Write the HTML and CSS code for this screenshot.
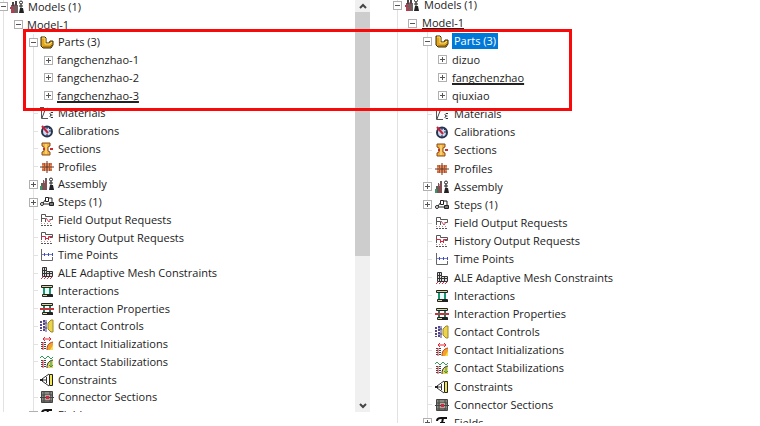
FILE: index.html
```html
<!DOCTYPE html>
<html lang="en">
<head>
    <meta charset="utf-8">
    <title>Model Tree</title>
    <link rel="stylesheet" href="styles.css">
</head>
<body>
<svg class="sprite" aria-hidden="true">
    <symbol id="models" viewBox="0 0 14 14">
        <path d="M1 5h7v8H1z" fill="#666"/>
        <path d="M2 2h2v4H2zM5 1h2v5H5z" fill="#444"/>
        <path d="M0 7h3v2H0zM1 11h3v2H1z" fill="#d22f45"/>
        <path d="M4 4v9M6 5v8" stroke="#b33a4a" stroke-dasharray="1 1"/>
        <path d="M11 4v4M9 6h4" stroke="#222"/>
        <path d="M10 8h3l1 5H9z" fill="#222"/>
        <circle cx="11" cy="2.500" r="1.500" fill="#fff" stroke="#222"/>
    </symbol>
    <symbol id="parts" viewBox="0 0 14 14">
        <path d="M1 2h4l1 1v5h3l1-2h3v4l-2 3H3l-2-2z" fill="#e2a51f" stroke="#3b2a08"/>
        <path d="M2 3h3v6h5l2-2" fill="none" stroke="#ffe06a"/>
        <path d="M3 12h7l2-2" fill="none" stroke="#805a10"/>
    </symbol>
    <symbol id="materials" viewBox="0 0 14 14">
        <path d="M1.500 1v11.500H8" fill="none" stroke="#555"/>
        <path d="M2 12L5 4l3-2" fill="none" stroke="#444"/>
        <path d="M13 6.500h-2l-1 1 1 1.500h1.500M11 9l-1 1.500 1 1h2" fill="none" stroke="#333"/>
        <path d="M0 1.500h4" stroke="#555"/>
    </symbol>
    <symbol id="calibrations" viewBox="0 0 14 14">
        <circle cx="7" cy="7.500" r="5" fill="#c9daf2" stroke="#28344e" stroke-width="2"/>
        <path d="M2 2l6 7" stroke="#c5203a" stroke-width="2"/>
        <path d="M7 3v2M11 7H9M7 12v-2M10 4L9 5" stroke="#1c2a4a"/>
    </symbol>
    <symbol id="sections" viewBox="0 0 14 14">
        <path d="M2 1h8v3L8 5v4l2 1v3H2v-3l2-1V5L2 4z" fill="#efb23c" stroke="#8a4a1a"/>
        <path d="M6 2v10" stroke="#fff0a0"/>
        <path d="M10 7h3M3 7h2" stroke="#d3262c" stroke-width="2"/>
    </symbol>
    <symbol id="profiles" viewBox="0 0 14 14">
        <path d="M2 3h10v8H2z" fill="#ee8f5d"/>
        <path d="M2 3h3v2H2zM9 3h3v2H9zM2 9h3v2H2zM9 9h3v2H9z" fill="#d46e45"/>
        <path d="M0 7h14M7 1v12" stroke="#56342a"/>
        <path d="M4.500 3v8M9.500 3v8" stroke="#a5552f"/>
    </symbol>
    <symbol id="assembly" viewBox="0 0 14 14">
        <path d="M1 6h2V3h1v3h1V1h2v12H1z" fill="#5e625e"/>
        <path d="M0 9h2v4H0z" fill="#3f9464"/>
        <path d="M4 4v9M6 3v10" stroke="#a63d46"/>
        <path d="M11 4v4M9 6h4" stroke="#222"/>
        <path d="M10 8h3l1 5H9z" fill="#222"/>
        <circle cx="11" cy="2.500" r="1.500" fill="#fff" stroke="#222"/>
    </symbol>
    <symbol id="steps" viewBox="0 0 14 14">
        <path d="M3 8l3-4M4 9h5M8 3h4v4" fill="none" stroke="#222"/>
        <circle cx="2" cy="9" r="1.500" fill="#fff" stroke="#222"/>
        <path d="M5.500 2.500h3v4h-3z" fill="#fff" stroke="#222"/>
        <path d="M9.500 7.500h4v3h-4z" fill="#777" stroke="#222"/>
    </symbol>
    <symbol id="field" viewBox="0 0 14 14">
        <path d="M1.500 9V1.500h4v2h7v3h-3M1.500 5.500h4V9" fill="none" stroke="#555"/>
        <path d="M6 5l3 4 2-3" fill="none" stroke="#c8475a"/>
        <path d="M1 12.500h12" stroke="#555" stroke-dasharray="2 1"/>
        <path d="M1 10.500h12" stroke="#c5858c" stroke-dasharray="1 2"/>
    </symbol>
    <symbol id="history" viewBox="0 0 14 14">
        <path d="M1.500 9V1.500h4v2h7v3h-3" fill="none" stroke="#555"/>
        <path d="M1 5.500h4.500V9M8.500 9V5.500H12M5 7.500h3" fill="none" stroke="#d02b42"/>
        <path d="M1 12.500h12" stroke="#555" stroke-dasharray="2 1"/>
        <path d="M1 10.500h12" stroke="#c5858c" stroke-dasharray="1 2"/>
    </symbol>
    <symbol id="time" viewBox="0 0 14 14">
        <path d="M1.500 1v11.500h11V9" fill="none" stroke="#666"/>
        <path d="M2 6.500h10" stroke="#7d86cf"/>
        <path d="M4.500 5v3M8.500 5v3M12.500 5v3" stroke="#3d4cae"/>
    </symbol>
    <symbol id="ale" viewBox="0 0 14 14">
        <path d="M2.500 1.500h4v4h6v5h-10zM2 4.500h4M2 7.500h11M4.500 1v10M6.500 6v5M9.500 6v5" fill="#ddd" stroke="#333"/>
        <path d="M1 13l2-2M4 13l2-2M7 13l2-2M10 13l2-2" stroke="#d83248"/>
    </symbol>
    <symbol id="interactions" viewBox="0 0 14 14">
        <path d="M1.500 1.500h11v2h-11zM2.500 10.500h10v2h-10z" fill="#d8d69a" stroke="#222"/>
        <path d="M4 4h6v6H4z" fill="#e7fff7"/>
        <path d="M4 4v6M10 4v6" stroke="#169a73" stroke-width="2"/>
        <path d="M7 12h6" stroke="#222" stroke-width="2"/>
    </symbol>
    <symbol id="properties" viewBox="0 0 14 14">
        <path d="M1.500 1.500h11v2h-11zM2.500 10.500h10v2h-10z" fill="#d8d69a" stroke="#222"/>
        <path d="M4 4v6M10 4v6" stroke="#15836a" stroke-width="2"/>
        <path d="M0 7h14" stroke="#c8323d" stroke-width="2"/>
        <path d="M7 12h6" stroke="#222" stroke-width="2"/>
    </symbol>
    <symbol id="controls" viewBox="0 0 14 14">
        <path d="M1 2v10M4 1v12" stroke="#55448e" stroke-width="2" stroke-dasharray="2 1"/>
        <path d="M6 1v12M3 4h4M3 9h4" stroke="#4c4378"/>
        <path d="M13 1v12h-2L8 10V4l3-3z" fill="#ecd44a" stroke="#9c8628"/>
    </symbol>
    <symbol id="initializations" viewBox="0 0 14 14">
        <path d="M2 5v8M5 5v8" stroke="#444" stroke-width="2" stroke-dasharray="1 1"/>
        <path d="M3 5v8" stroke="#d92f3e"/>
        <path d="M7 13c0-4 1-7 6-8v8z" fill="#f0a22c"/>
        <path d="M7 13c0-4 1-7 6-8" fill="none" stroke="#b8402a"/>
        <path d="M10 13l3-5v5z" fill="#f8df4a"/>
        <path d="M3 2h8M5 0L3 2l2 2M9 0l2 2-2 2" fill="none" stroke="#e32636"/>
    </symbol>
    <symbol id="stabilizations" viewBox="0 0 14 14">
        <path d="M2 5v8M5 5v8" stroke="#444" stroke-width="2" stroke-dasharray="1 1"/>
        <path d="M3 5v8" stroke="#d92f3e"/>
        <path d="M7 13c0-4 1-7 6-8v8z" fill="#ead45b"/>
        <path d="M7 13c0-4 1-7 6-8" fill="none" stroke="#333"/>
        <path d="M0 3l2-2 3 3 3-3 3 3 2-2M11 6v6M9 10l2 2 2-2" fill="none" stroke="#2e9a54"/>
    </symbol>
    <symbol id="constraints" viewBox="0 0 14 14">
        <path d="M9.500 1.500h3v11h-3z" fill="#f0e84a" stroke="#222"/>
        <path d="M9 1L2 6v2l7 5M6.500 4v6M2 7h4" fill="none" stroke="#333"/>
        <path d="M0 6h3v2H0z" fill="#222"/>
    </symbol>
    <symbol id="connector" viewBox="0 0 14 14">
        <path d="M1.500 1.500h11v11h-11z" fill="#8b8b82" stroke="#444"/>
        <path d="M4 1v12M10 1v12M1 5h12M1 11h12" stroke="#444"/>
        <path d="M5 5h5v5H5z" fill="#b7a6a0"/>
        <path d="M0 7.500h14" stroke="#444"/>
        <path d="M6 6h3v3H6z" fill="#cf2940"/>
    </symbol>
    <symbol id="fields" viewBox="0 0 14 14">
        <path d="M2 5c0-3 2-3 4-3h6M8 2L6 12H3M5 7h5" fill="none" stroke="#111" stroke-width="2"/>
    </symbol>
</svg>

<main class="compare">
    <section class="pane pane-left">
        <ul class="tree">
            <li class="row root"><button class="toggle minus" aria-label="Collapse Models"></button><svg class="icon"><use href="#models"/></svg><span class="label">Models (1)</span></li>
            <li class="row model"><button class="toggle minus" aria-label="Collapse Model-1"></button><span class="label">Model-1</span></li>
            <li class="row item"><button class="toggle minus" aria-label="Collapse Parts"></button><svg class="icon"><use href="#parts"/></svg><span class="label">Parts (3)</span></li>
            <li class="row part"><button class="toggle plus" aria-label="Expand fangchenzhao-1"></button><span class="label">fangchenzhao-1</span></li>
            <li class="row part"><button class="toggle plus" aria-label="Expand fangchenzhao-2"></button><span class="label">fangchenzhao-2</span></li>
            <li class="row part"><button class="toggle plus" aria-label="Expand fangchenzhao-3"></button><span class="label current">fangchenzhao-3</span></li>
            <li class="row item"><span class="branch"></span><svg class="icon"><use href="#materials"/></svg><span class="label">Materials</span></li>
            <li class="row item"><span class="branch"></span><svg class="icon"><use href="#calibrations"/></svg><span class="label">Calibrations</span></li>
            <li class="row item"><span class="branch"></span><svg class="icon"><use href="#sections"/></svg><span class="label">Sections</span></li>
            <li class="row item"><span class="branch"></span><svg class="icon"><use href="#profiles"/></svg><span class="label">Profiles</span></li>
            <li class="row item"><button class="toggle plus" aria-label="Expand Assembly"></button><svg class="icon"><use href="#assembly"/></svg><span class="label">Assembly</span></li>
            <li class="row item"><button class="toggle plus" aria-label="Expand Steps"></button><svg class="icon"><use href="#steps"/></svg><span class="label">Steps (1)</span></li>
            <li class="row item"><span class="branch"></span><svg class="icon"><use href="#field"/></svg><span class="label">Field Output Requests</span></li>
            <li class="row item"><span class="branch"></span><svg class="icon"><use href="#history"/></svg><span class="label">History Output Requests</span></li>
            <li class="row item"><span class="branch"></span><svg class="icon"><use href="#time"/></svg><span class="label">Time Points</span></li>
            <li class="row item"><span class="branch"></span><svg class="icon"><use href="#ale"/></svg><span class="label">ALE Adaptive Mesh Constraints</span></li>
            <li class="row item"><span class="branch"></span><svg class="icon"><use href="#interactions"/></svg><span class="label">Interactions</span></li>
            <li class="row item"><span class="branch"></span><svg class="icon"><use href="#properties"/></svg><span class="label">Interaction Properties</span></li>
            <li class="row item"><span class="branch"></span><svg class="icon"><use href="#controls"/></svg><span class="label">Contact Controls</span></li>
            <li class="row item"><span class="branch"></span><svg class="icon"><use href="#initializations"/></svg><span class="label">Contact Initializations</span></li>
            <li class="row item"><span class="branch"></span><svg class="icon"><use href="#stabilizations"/></svg><span class="label">Contact Stabilizations</span></li>
            <li class="row item"><span class="branch"></span><svg class="icon"><use href="#constraints"/></svg><span class="label">Constraints</span></li>
            <li class="row item"><span class="branch"></span><svg class="icon"><use href="#connector"/></svg><span class="label">Connector Sections</span></li>
            <li class="row item"><button class="toggle plus" aria-label="Expand Fields"></button><svg class="icon"><use href="#fields"/></svg><span class="label">Fields</span></li>
        </ul>
        <div class="scrollbar">
            <button class="arrow" aria-label="Scroll up"><svg viewBox="0 0 8 6"><path d="M1 5l3-3 3 3"/></svg></button>
            <div class="track"><div class="thumb"></div></div>
            <button class="arrow" aria-label="Scroll down"><svg viewBox="0 0 8 6"><path d="M1 1l3 3 3-3"/></svg></button>
        </div>
    </section>

    <section class="pane pane-right">
        <ul class="tree">
            <li class="row root"><button class="toggle minus" aria-label="Collapse Models"></button><svg class="icon"><use href="#models"/></svg><span class="label">Models (1)</span></li>
            <li class="row model"><button class="toggle minus" aria-label="Collapse Model-1"></button><span class="label current">Model-1</span></li>
            <li class="row item"><button class="toggle minus" aria-label="Collapse Parts"></button><svg class="icon"><use href="#parts"/></svg><span class="label selected">Parts (3)</span></li>
            <li class="row part"><button class="toggle plus" aria-label="Expand dizuo"></button><span class="label">dizuo</span></li>
            <li class="row part"><button class="toggle plus" aria-label="Expand fangchenzhao"></button><span class="label current">fangchenzhao</span></li>
            <li class="row part"><button class="toggle plus" aria-label="Expand qiuxiao"></button><span class="label">qiuxiao</span></li>
            <li class="row item"><span class="branch"></span><svg class="icon"><use href="#materials"/></svg><span class="label">Materials</span></li>
            <li class="row item"><span class="branch"></span><svg class="icon"><use href="#calibrations"/></svg><span class="label">Calibrations</span></li>
            <li class="row item"><span class="branch"></span><svg class="icon"><use href="#sections"/></svg><span class="label">Sections</span></li>
            <li class="row item"><span class="branch"></span><svg class="icon"><use href="#profiles"/></svg><span class="label">Profiles</span></li>
            <li class="row item"><button class="toggle plus" aria-label="Expand Assembly"></button><svg class="icon"><use href="#assembly"/></svg><span class="label">Assembly</span></li>
            <li class="row item"><button class="toggle plus" aria-label="Expand Steps"></button><svg class="icon"><use href="#steps"/></svg><span class="label">Steps (1)</span></li>
            <li class="row item"><span class="branch"></span><svg class="icon"><use href="#field"/></svg><span class="label">Field Output Requests</span></li>
            <li class="row item"><span class="branch"></span><svg class="icon"><use href="#history"/></svg><span class="label">History Output Requests</span></li>
            <li class="row item"><span class="branch"></span><svg class="icon"><use href="#time"/></svg><span class="label">Time Points</span></li>
            <li class="row item"><span class="branch"></span><svg class="icon"><use href="#ale"/></svg><span class="label">ALE Adaptive Mesh Constraints</span></li>
            <li class="row item"><span class="branch"></span><svg class="icon"><use href="#interactions"/></svg><span class="label">Interactions</span></li>
            <li class="row item"><span class="branch"></span><svg class="icon"><use href="#properties"/></svg><span class="label">Interaction Properties</span></li>
            <li class="row item"><span class="branch"></span><svg class="icon"><use href="#controls"/></svg><span class="label">Contact Controls</span></li>
            <li class="row item"><span class="branch"></span><svg class="icon"><use href="#initializations"/></svg><span class="label">Contact Initializations</span></li>
            <li class="row item"><span class="branch"></span><svg class="icon"><use href="#stabilizations"/></svg><span class="label">Contact Stabilizations</span></li>
            <li class="row item"><span class="branch"></span><svg class="icon"><use href="#constraints"/></svg><span class="label">Constraints</span></li>
            <li class="row item"><span class="branch"></span><svg class="icon"><use href="#connector"/></svg><span class="label">Connector Sections</span></li>
            <li class="row item"><button class="toggle plus" aria-label="Expand Fields"></button><svg class="icon"><use href="#fields"/></svg><span class="label">Fields</span></li>
        </ul>
    </section>

    <div class="marker"></div>
</main>
</body>
</html>
```
FILE: styles.css
```css
body {
    margin: 0;
    background-color: white;
    color: #222;
    font-family: "Open Sans", "Noto Sans", sans-serif;
    font-size: 11px;
    line-height: 16px;
}

.sprite {
    display: none;
}

.compare {
    position: relative;
    display: flex;
    gap: 22px;
    height: 100vh;
    overflow: hidden;
}

.pane {
    display: flex;
    overflow: hidden;
}

.pane-left {
    flex: 0 0 370px;
    margin-bottom: 14px;
}

.pane-right {
    flex: 1;
    margin-bottom: 3px;
}

/* rows share the tree height equally */
.tree {
    flex: 1;
    display: grid;
    grid-auto-rows: 1fr;
    height: 426px;
    margin: -2px 0 0 -2px;
    padding: 0;
    list-style: none;
}

.pane-right .tree {
    height: 436px;
    margin: -4px 0 0 0;
}

.row {
    display: flex;
    align-items: center;
    background: linear-gradient(#e2e2e2, #e2e2e2) 5px 0 / 1px 100% no-repeat;
    white-space: nowrap;
}

.model {
    padding-left: 15px;
}

.item,
.part {
    padding-left: 30px;
    background:
        linear-gradient(#e2e2e2, #e2e2e2) 5px 0 / 1px 100% no-repeat,
        linear-gradient(#e2e2e2, #e2e2e2) 35px 0 / 1px 100% no-repeat;
}

.part {
    padding-left: 45px;
}

.toggle {
    flex: none;
    width: 9px;
    height: 9px;
    margin: 0 2px 0 1px;
    padding: 0;
    border: 1px solid #b0b0b0;
    background: linear-gradient(#555, #555) center / 5px 1px no-repeat white;
}

.toggle.plus {
    background:
        linear-gradient(#555, #555) center / 5px 1px no-repeat,
        linear-gradient(#555, #555) center / 1px 5px no-repeat white;
}

.branch {
    flex: none;
    width: 4px;
    margin: 0 2px 0 6px;
    border-top: 1px solid #e2e2e2;
}

.icon {
    flex: none;
    width: 14px;
    height: 14px;
    margin-right: 2px;
}

.label {
    padding: 0 2px;
}

.pane-right .icon {
    margin: 0 2px 0 1px;
}

.pane-right .label {
    margin-left: 1px;
}

.current {
    text-decoration: underline;
    text-decoration-thickness: 2px;
    text-underline-offset: 1px;
    text-decoration-skip-ink: none;
}

.selected {
    background-color: #0078d7;
    color: white;
}

.scrollbar {
    flex: none;
    display: flex;
    flex-direction: column;
    width: 15px;
    background-color: #f0f0f0;
}

.arrow {
    display: flex;
    align-items: center;
    justify-content: center;
    height: 12px;
    padding: 0;
    border: none;
    background: none;
}

.arrow svg {
    width: 8px;
    height: 6px;
    fill: none;
    stroke: #444;
    stroke-width: 2;
}

.track {
    flex: 1;
}

.thumb {
    height: 63%;
    background-color: #cdcdcd;
}

/* red frame over the parts of both trees */
.marker {
    position: absolute;
    top: 29px;
    left: 23px;
    width: 543px;
    height: 76px;
    border: 3px solid #f80a0a;
    pointer-events: none;
}
```
